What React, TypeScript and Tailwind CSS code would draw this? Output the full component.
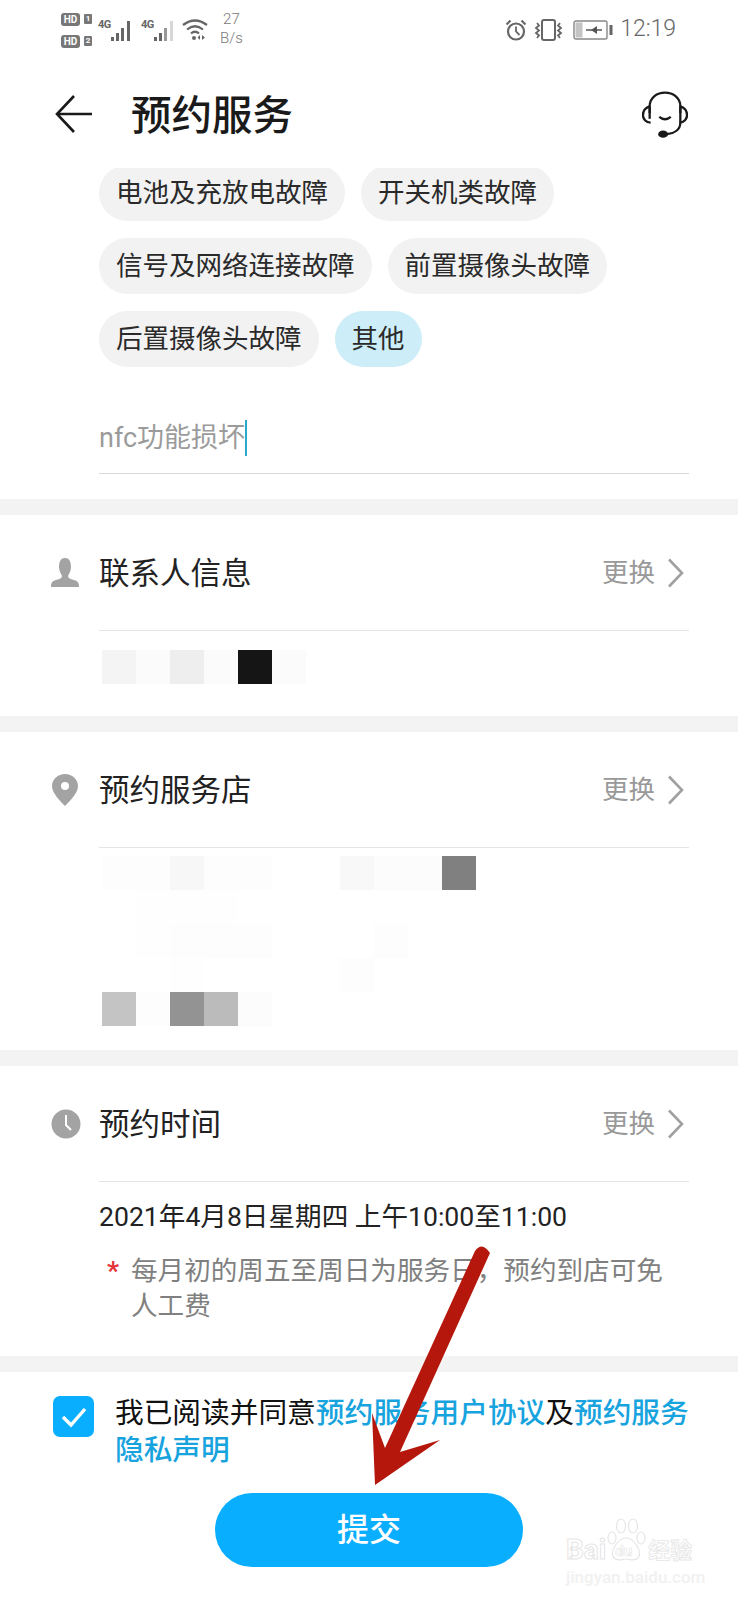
import React from 'react';

const MosaicRow: React.FC<{ cells: string[] }> = ({ cells }) => {
  return (
    <div className="flex h-[34px] pl-[102px]">
      {cells.map((c, i) => (
        <div key={i} className={`w-[34px] h-[34px] ${c}`} />
      ))}
    </div>
  );
};

const Band = () => <div className="h-[16px] bg-[#f3f3f3]" />;

const Divider = () => <div className="ml-[99px] mr-[49px] h-px bg-[#e4e4e4]" />;

const SectionHeader: React.FC<{ icon: React.ReactNode; title: string }> = ({ icon, title }) => {
  return (
    <>
      <div className="flex items-center h-[115px] pl-[51px] pr-[53px]">
        <div className="w-[48px] shrink-0">{icon}</div>
        <span className="mt-[2px] text-[30.5px] text-[#222222]">{title}</span>
        <span className="ml-auto mt-[1px] text-[26.5px] text-[#999999]">更换</span>
        <svg width="18" height="30" viewBox="0 0 18 30" className="ml-[12px]" fill="none" stroke="#a0a0a0" strokeWidth="2.6">
          <path d="M2 1.5 L15 15 L2 28.5" />
        </svg>
      </div>
      <Divider />
    </>
  );
};

const chips = [
  ['电池及充放电故障', '开关机类故障'],
  ['信号及网络连接故障', '前置摄像头故障'],
  ['后置摄像头故障', '其他'],
];

const Chip: React.FC<{ label: string }> = ({ label }) => {
  const active = label === '其他';
  return (
    <div
      className={`h-[56px] flex items-center px-[17px] rounded-[28px] text-[26.5px] text-[#2a2a2a] ${
        active ? 'bg-[#cdeef8]' : 'bg-[#f2f2f2]'
      }`}
    >
      {label}
    </div>
  );
};

const StatusBar = () => {
  return (
    <div className="h-[60px] flex items-center justify-between pl-[61px] pr-[62px] text-[#666666]">
      <div className="flex items-center">
        {/* HD 标记 */}
        <div className="flex flex-col gap-[9px] w-[37px]">
          {['1', '2'].map((n) => (
            <div key={n} className="flex items-center gap-[4px]">
              <span className="w-[19px] h-[13px] rounded-[3px] bg-[#777777] text-white text-[10px] leading-[13px] font-bold text-center">HD</span>
              <span className="w-[8px] h-[10px] rounded-[1px] bg-[#777777] text-white text-[8px] leading-[10px] font-bold text-center">{n}</span>
            </div>
          ))}
        </div>
        {/* 信号 */}
        <span className="text-[11px] font-bold self-start mt-[5px] w-[13px] tracking-[-0.5px]">4G</span>
        <svg width="22" height="22" viewBox="0 0 22 22" fill="#666666" className="mt-[1px]">
          <rect x="0" y="17" width="3" height="4" />
          <rect x="5" y="13" width="3" height="8" />
          <rect x="10" y="8" width="3" height="13" />
          <rect x="16" y="1" width="3" height="20" />
        </svg>
        <span className="text-[11px] font-bold self-start mt-[5px] ml-[8px] w-[13px] tracking-[-0.5px]">4G</span>
        <svg width="22" height="22" viewBox="0 0 22 22" fill="#666666" className="mt-[1px]">
          <rect x="0" y="17" width="3" height="4" />
          <rect x="5" y="13" width="3" height="8" />
          <rect x="10" y="8" width="3" height="13" fill="#999999" />
          <rect x="16" y="1" width="3" height="20" fill="#d8d8d8" />
        </svg>
        {/* wifi */}
        <svg width="26" height="22" viewBox="0 0 26 22" fill="none" stroke="#666666" strokeWidth="2.2" className="ml-[6px]">
          <path d="M1 6 Q13 -3 25 6" />
          <path d="M5 10.5 Q13 4 21 10.5" />
          <path d="M9 14.5 Q13 11 17 14.5" />
          <circle cx="12" cy="19" r="2" fill="#666666" stroke="none" />
          <path d="M18 16 L18 21 L15.5 18.5 Z" fill="#666666" stroke="none" />
          <path d="M20 16 L20 21 L23 18.5 Z" fill="#666666" stroke="none" />
        </svg>
        <div className="flex flex-col items-center ml-[12px] -mt-[2px] text-[15px] leading-[19px] text-[#777777] font-light">
          <span>27</span>
          <span>B/s</span>
        </div>
      </div>
      <div className="flex items-center -mt-[1px]">
        {/* 闹钟 */}
        <svg width="22" height="22" viewBox="0 0 22 22" fill="none" stroke="#666666" strokeWidth="2.2" className="ml-[3px]">
          <circle cx="11" cy="12.5" r="8" />
          <path d="M11 7.5 V12.5 L14.5 16" strokeWidth="1.8" />
          <path d="M1.5 5.5 L5.5 1.5" />
          <path d="M20.5 5.5 L16.5 1.5" />
        </svg>
        {/* 振动 */}
        <svg width="30" height="22" viewBox="0 0 30 22" fill="none" stroke="#666666" strokeWidth="1.8" className="ml-[7px]">
          <rect x="8" y="1" width="13" height="20" rx="2" strokeWidth="2" />
          <path d="M3 4 L5 6.5 L2 9 L5 11.5 L2 14 L5 16.5 L3 19" />
          <path d="M26 4 L24 6.5 L27 9 L24 11.5 L27 14 L24 16.5 L26 19" />
        </svg>
        {/* 电池 */}
        <div className="flex items-center ml-[9px]">
          <svg width="40" height="20" viewBox="0 0 40 20" fill="none">
            <rect x="1" y="1" width="33" height="18" rx="2" stroke="#888888" strokeWidth="1.4" />
            <rect x="2.5" y="2.5" width="7" height="15" fill="#c4c4c4" />
            <path d="M13 10 H29" stroke="#555555" strokeWidth="1.5" />
            <path d="M24 6 L18 10 L24 14 Z" fill="#555555" />
            <rect x="36.5" y="5" width="3" height="10" fill="#666666" />
          </svg>
        </div>
        <span className="ml-[7px] text-[23px] text-[#666666] font-light">12:19</span>
      </div>
    </div>
  );
};

const Header = () => {
  return (
    <div className="h-[108px] flex items-center pl-[54px] pr-[50px]">
      <svg width="40" height="40" viewBox="0 0 40 40" fill="none" stroke="#1a1a1a" strokeWidth="2.6">
        <path d="M38 20 H3" />
        <path d="M20 2 L3 20 L20 38" />
      </svg>
      <span className="ml-[37px] mt-[4px] text-[40.5px] font-medium text-[#1a1a1a]">预约服务</span>
      <svg width="46" height="50" viewBox="0 0 48 50" fill="none" stroke="#1a1a1a" strokeWidth="2.4" className="ml-auto">
        <path d="M8 24 V17 C8 -2 40 -2 40 17 V24" />
        <path d="M8 17 C2 19 1 24 1 26 C1 30 4 34 9 34" />
        <path d="M40 17 C46 19 47 24 47 26 C47 30 44 34 39 34" />
        <path d="M8 17 V30" />
        <path d="M40 17 V34" />
        <path d="M18 28 Q24 33 30 28" />
        <path d="M40 34 C40 41 34 45 26 46" />
        <ellipse cx="22" cy="46" rx="4" ry="2.6" fill="#1a1a1a" />
      </svg>
    </div>
  );
};

export default function App() {
  return (
    <div className="relative w-[738px] h-[1600px] overflow-hidden bg-white font-['Roboto','Noto_Sans_CJK_SC',sans-serif]">
      <StatusBar />
      <Header />

      {/* 故障类型 */}
      <div className="h-[331px] overflow-hidden pl-[99px] pr-[49px]">
        <div className="flex flex-col gap-[17px] -mt-[3px]">
          {chips.map((row, i) => (
            <div key={i} className="flex gap-[16px]">
              {row.map((label) => (
                <Chip key={label} label={label} />
              ))}
            </div>
          ))}
        </div>
        <div className="flex items-center h-[44px] mt-[49px] text-[27px] text-[#9b9b9b]">
          nfc功能损坏
          <span className="w-[2px] h-[36px] bg-[#2aa9c8]" />
        </div>
        <div className="h-px bg-[#d9d9d9] mt-[13px]" />
      </div>
      <Band />

      {/* 联系人信息 */}
      <div className="h-[201px]">
        <SectionHeader
          title="联系人信息"
          icon={
            <svg width="28" height="30" viewBox="0 0 28 30" fill="#a3a3a3">
              <path d="M14 0 C19 0 20 5 20 9 C20 13 18 16 17 18 C17 20 19 21 23 22 C27 23 28 25 28 29 H0 C0 25 1 23 5 22 C9 21 11 20 11 18 C10 16 8 13 8 9 C8 5 9 0 14 0 Z" />
            </svg>
          }
        />
        <div className="pt-[19px]">
          <MosaicRow cells={['bg-[#f4f4f4]', 'bg-[#fbfbfb]', 'bg-[#eeeeee]', 'bg-[#fbfbfb]', 'bg-[#151515]', 'bg-[#fbfbfb]']} />
        </div>
      </div>
      <Band />

      {/* 预约服务店 */}
      <div className="h-[318px]">
        <SectionHeader
          title="预约服务店"
          icon={
            <svg width="28" height="32" viewBox="0 0 28 32" fill="#a3a3a3">
              <path fillRule="evenodd" d="M14 0 C21 0 27 5 27 12 C27 19 19 27 14 32 C9 27 1 19 1 12 C1 5 7 0 14 0 Z M14 8 A4 4 0 1 0 14 16 A4 4 0 1 0 14 8 Z" />
            </svg>
          }
        />
        <div className="pt-[8px]">
          <MosaicRow cells={['bg-[#fdfdfd]', 'bg-[#fdfdfd]', 'bg-[#f7f7f7]', 'bg-[#fdfdfd]', 'bg-[#fdfdfd]', 'bg-white', 'bg-white', 'bg-[#f8f8f8]', 'bg-[#fcfcfc]', 'bg-[#fcfcfc]', 'bg-[#808080]']} />
          <MosaicRow cells={['bg-white', 'bg-[#fefefe]', 'bg-[#fefefe]', 'bg-[#fefefe]', 'bg-white']} />
          <MosaicRow cells={['bg-white', 'bg-[#fefefe]', 'bg-[#fdfdfd]', 'bg-[#fdfdfd]', 'bg-[#fdfdfd]', 'bg-white', 'bg-white', 'bg-white', 'bg-[#fdfdfd]']} />
          <MosaicRow cells={['bg-white', 'bg-white', 'bg-[#fefefe]', 'bg-white', 'bg-white', 'bg-white', 'bg-white', 'bg-[#fdfdfd]']} />
          <MosaicRow cells={['bg-[#c4c4c4]', 'bg-[#fdfdfd]', 'bg-[#939393]', 'bg-[#bbbbbb]', 'bg-[#fcfcfc]']} />
        </div>
      </div>
      <Band />

      {/* 预约时间 */}
      <div className="h-[290px]">
        <SectionHeader
          title="预约时间"
          icon={
            <svg width="30" height="30" viewBox="0 0 30 30">
              <circle cx="15" cy="15" r="14.5" fill="#a3a3a3" />
              <path d="M15 6 V16 L20 21" fill="none" stroke="#ffffff" strokeWidth="2" />
            </svg>
          }
        />
        <div className="pl-[99px] pt-[17px] text-[26.6px] leading-[36px] text-[#222222]">2021年4月8日星期四 上午10:00至11:00</div>
        <div className="flex pl-[107px] pt-[18px] text-[26.6px] leading-[35px] text-[#808080]">
          <span className="w-[24px] shrink-0 text-[#e5343a] font-bold">*</span>
          <span className="w-[540px]">每月初的周五至周日为服务日，预约到店可免人工费</span>
        </div>
      </div>
      <Band />

      {/* 协议 */}
      <div className="flex pl-[53px] pt-[24px]">
        <div className="w-[41px] h-[41px] shrink-0 rounded-[7px] bg-[#0aaeff] flex items-center justify-center">
          <svg width="26" height="22" viewBox="0 0 26 22" fill="none" stroke="#ffffff" strokeWidth="3.4">
            <path d="M2 11 L10 19 L24 3" />
          </svg>
        </div>
        <p className="w-[578px] ml-[21px] -mt-[1px] text-[28.7px] leading-[37px] text-[#111111]">
          我已阅读并同意<span className="font-medium text-[#17a3de]">预约服务用户协议</span>及<span className="font-medium text-[#17a3de]">预约服务隐私声明</span>
        </p>
      </div>

      {/* 提交 */}
      <div className="pl-[215px] mt-[24px]">
        <button className="block w-[308px] h-[74px] rounded-[37px] bg-[#0aaeff] text-white text-[32px] font-medium">提交</button>
      </div>

      {/* 红色箭头 */}
      <svg width="738" height="1600" viewBox="0 0 738 1600" className="absolute inset-0 pointer-events-none">
        <path d="M475 1251 Q482 1241 490 1253 L400 1452 L440 1440 L375 1485 L372 1413 L385 1448 Z" fill="#b5170c" />
      </svg>

      {/* 水印 */}
      <div className="absolute left-[566px] top-[1518px] w-[140px] pointer-events-none">
        <div className="flex items-end h-[46px]">
          <span className="text-[28px] leading-[28px] font-bold text-white [-webkit-text-stroke:1px_#e6e6e6]">Bai</span>
          <span className="relative w-[40px] h-[46px] shrink-0">
            <svg width="40" height="44" viewBox="0 0 40 44" fill="none" stroke="#e6e6e6" strokeWidth="1.2" className="absolute left-0 top-0">
              <ellipse cx="6" cy="20" rx="4" ry="6" />
              <ellipse cx="15" cy="8" rx="4.5" ry="7" />
              <ellipse cx="27" cy="8" rx="4.5" ry="7" />
              <ellipse cx="35" cy="20" rx="4" ry="6" />
              <path d="M20 20 C28 20 37 34 32 40 C28 44 24 41 20 41 C16 41 12 44 8 40 C3 34 12 20 20 20 Z" />
            </svg>
            <span className="absolute left-[9px] bottom-[5px] text-[15px] leading-[15px] font-bold text-white [-webkit-text-stroke:0.6px_#e6e6e6]">du</span>
          </span>
          <span className="ml-[2px] text-[22px] leading-[26px] font-bold text-white [-webkit-text-stroke:0.8px_#e6e6e6]">经验</span>
        </div>
        <div className="mt-[2px] text-[17px] leading-[22px] text-[#f1f1f1] font-medium">jingyan.baidu.com</div>
      </div>
    </div>
  );
}
